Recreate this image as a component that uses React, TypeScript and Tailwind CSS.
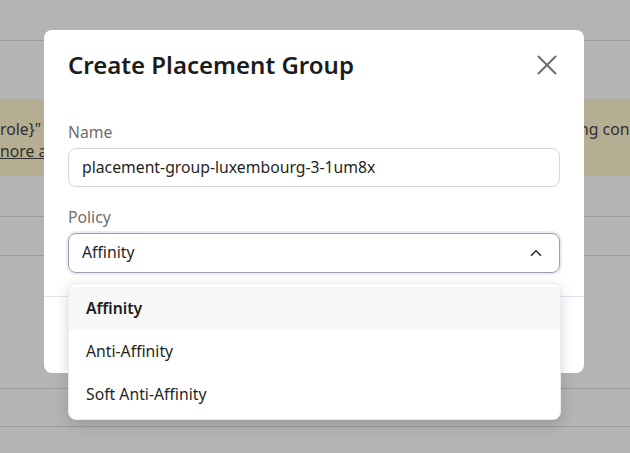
import { ChevronUp } from "lucide-react";

const options = ["Affinity", "Anti-Affinity", "Soft Anti-Affinity"];

export default function App() {
  const selected = "Affinity";

  return (
    <div
      className="relative w-[630px] h-[453px] overflow-hidden bg-[#b4b4b4] text-[#262626]"
      style={{ fontFamily: '"Noto Sans", "Open Sans", sans-serif' }}
    >
      {/* Page behind the overlay */}
      <div className="flex flex-col">
        <div className="h-[41px] border-b border-[#9b9b9b]" />
        <div className="h-[58px]" />
        <div className="h-[77px] bg-[#b6ae93] flex justify-between text-[15.75px] leading-[22px] text-[#2e2e2e] pt-[19px]">
          <div className="w-[44px] overflow-hidden whitespace-nowrap">
            <p>{'role}" must'}</p>
            <p className="underline">nore about</p>
          </div>
          <div className="w-[55px] overflow-hidden whitespace-nowrap">
            <p>ing configuration</p>
          </div>
        </div>
        <div className="h-[41px] border-b border-[#9b9b9b]" />
        <div className="h-[39px] border-b border-[#9b9b9b]" />
        <div className="h-[133px] border-b border-[#9b9b9b]" />
        <div className="h-[38px] border-b border-[#9b9b9b]" />
      </div>

      {/* Dialog */}
      <div className="absolute left-[44px] top-[30px] w-[540px] h-[343px] rounded-lg bg-white flex flex-col">
        <div className="flex items-center justify-between pl-6 pr-[27px] pt-[19px]">
          <h2 className="text-[24px] leading-8 font-semibold text-[#1c1c1c]">Create Placement Group</h2>
          <svg viewBox="0 0 20 20" className="w-5 h-5 text-[#6d6c78]" fill="none" stroke="currentColor" strokeWidth={2} strokeLinecap="round" aria-hidden="true">
            <path d="M1.5 1.5 18.5 18.5M18.5 1.5 1.5 18.5" />
          </svg>
        </div>

        <div className="px-6 pt-[41px] flex flex-col">
          <label className="text-[15.75px] leading-5 text-[#6e6e6e]">Name</label>
          <div className="mt-[6px] h-[39px] rounded-lg border border-[#d6d6dc] flex items-center px-[13px] text-[15.75px] text-[#1f1f1f]">
            placement-group-luxembourg-3-1um8x
          </div>

          <label className="mt-[20px] text-[15.75px] leading-5 text-[#6e6e6e]">Policy</label>
          <div className="mt-[6px] h-[40px] rounded-lg border border-[#9e9db0] shadow-[0_0_0_2px_#ecebf5] flex items-center justify-between pl-[13px] pr-[14px] text-[15.75px] text-[#1f1f1f]">
            <span>{selected}</span>
            <ChevronUp className="w-[18px] h-[18px] text-[#2a2a2a]" strokeWidth={2} />
          </div>
        </div>

        <div className="mt-[23px] border-t border-[#e2e1ee]" />
      </div>

      {/* Dropdown menu */}
      <div className="absolute left-[68px] top-[283px] w-[493px] rounded-lg bg-white border border-[#ececf0] shadow-[0_4px_14px_rgba(0,0,0,0.16)] py-[3px] overflow-hidden">
        {options.map((o) => (
          <div
            key={o}
            className={
              o === selected
                ? "h-[43px] flex items-center px-[17px] text-[15.75px] font-semibold text-[#1c1c1c] bg-[#f7f7f8]"
                : "h-[43px] flex items-center px-[17px] text-[15.75px] text-[#1f1f1f]"
            }
          >
            {o}
          </div>
        ))}
      </div>
    </div>
  );
}
